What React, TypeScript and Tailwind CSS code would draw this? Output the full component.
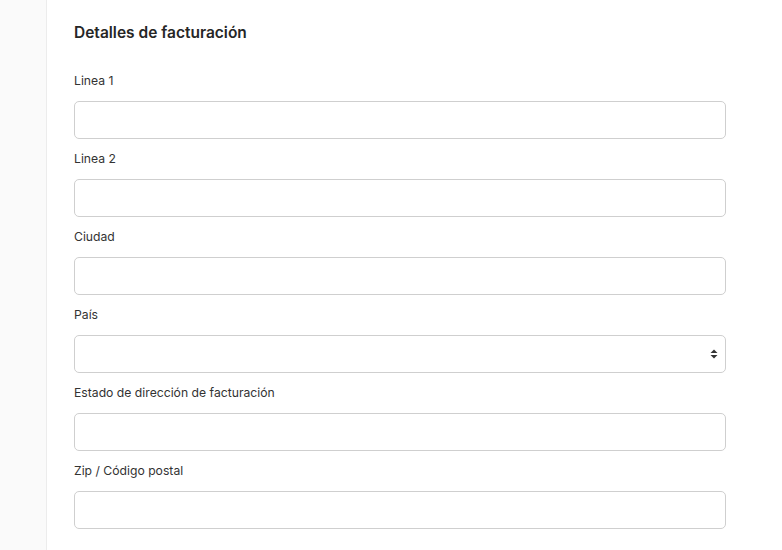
const fields = [
  { label: 'Linea 1', type: 'input' },
  { label: 'Linea 2', type: 'input' },
  { label: 'Ciudad', type: 'input' },
  { label: 'País', type: 'select' },
  { label: 'Estado de dirección de facturación', type: 'input' },
  { label: 'Zip / Código postal', type: 'input' },
];

export default function App() {
  return (
    <div
      className="flex w-[782px] h-[550px] overflow-hidden bg-white text-[#2b2b2b]"
      style={{ fontFamily: 'Inter, "Noto Sans", sans-serif' }}
    >
      {/* Sidebar */}
      <div className="w-[47px] shrink-0 bg-[#fafafa] border-r border-[#ececec]" />

      {/* Billing details */}
      <div className="flex-1 pl-[27px] pr-[56px] pt-[21px]">
        <h2 className="text-[15.5px] leading-[24px] font-semibold mb-[25px] text-[#262626]">
          Detalles de facturación
        </h2>
        {fields.map(f => (
          <div key={f.label} className="mb-[9px]">
            <label className="block text-[12.2px] leading-[20px] pt-[1px] mb-[10px] text-[#333]">{f.label}</label>
            {f.type === 'select' ? (
              <div className="relative">
                <select className="w-full h-[38px] appearance-none rounded-[5px] border border-[#cfcfcf] bg-white px-3 text-[13px] outline-none">
                  <option value=""></option>
                </select>
                <span className="pointer-events-none absolute right-[8px] top-1/2 -translate-y-1/2 flex flex-col items-center">
                  <svg width="8" height="10" viewBox="0 0 8 10">
                    <path d="M4 0.5 L7.5 4 H0.5 Z" fill="#333" />
                    <path d="M4 9.5 L7.5 6 H0.5 Z" fill="#333" />
                  </svg>
                </span>
              </div>
            ) : (
              <input
                type="text"
                className="block w-full h-[38px] rounded-[5px] border border-[#cfcfcf] bg-white px-3 text-[13px] outline-none"
              />
            )}
          </div>
        ))}
      </div>
    </div>
  );
}
